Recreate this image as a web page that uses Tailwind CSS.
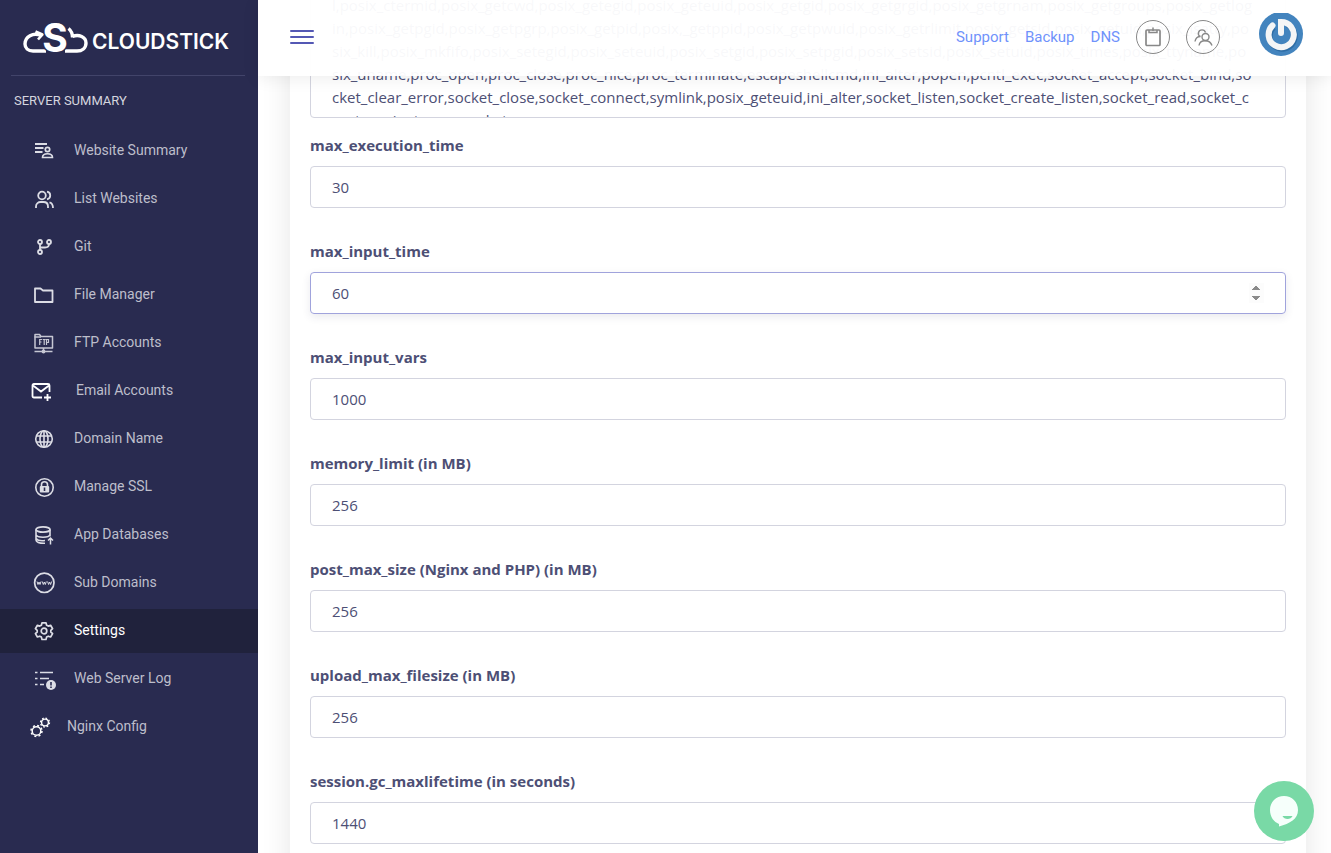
<!DOCTYPE html>
<html lang="en">
<head>
    <meta charset="UTF-8">
    <meta name="viewport" content="width=device-width, initial-scale=1.0">
    <title>CloudStick - Settings</title>
    <script src="https://cdn.jsdelivr.net/npm/@tailwindcss/browser@4"></script>
</head>
<body class="h-screen flex overflow-hidden bg-white font-['Open_Sans',sans-serif] text-[15px] text-[#4d4f75]">
    <!-- Sidebar -->
    <aside class="w-[258px] shrink-0 bg-[#292b50] font-[Roboto,sans-serif] text-[#bdbecb]">
        <a href="#" class="flex items-center h-[75px] pl-[22px] text-white" aria-label="CloudStick">
            <svg class="w-[68px] h-[60px]" viewBox="0 -12 68 60" fill="none" stroke="#fff" stroke-width="3.4">
                <path d="M19 15.500C11 12 3 17 3 24C3 28 6 31 11 31H24"/>
                <path d="M13.500 11.500L20.500 14.500L16 19.500" stroke-width="2.600"/>
                <path d="M43 31H55C60 31 64 28 64 23C64 17 57 14 50.500 16.500M46.500 8.500C49 10.500 50.500 13 50.500 17.500"/>
                <text x="33" y="32" font-family="Inter" font-size="39" font-weight="700" text-anchor="middle" fill="#fff" stroke="#292b50" stroke-width="3" paint-order="stroke">S</text>
            </svg>
            <span class="pt-[9px] pl-[2px] font-['Inter'] font-semibold text-[21px] leading-6">CLOUDSTICK</span>
        </a>
        <hr class="ml-[11px] mr-[13px] border-[#42446a]">
        <h2 class="px-[14px] pt-4 text-[13px] leading-[18px] text-[#d5d6df]">SERVER SUMMARY</h2>
        <nav class="mt-[19px] flex flex-col gap-1 text-[14px] leading-5 [&>a]:pb-[2px] [&_svg]:mt-[2px]">
            <a href="#" class="flex items-center h-[44px] pl-[33px]">
                <svg class="w-[22px] h-[22px] mr-[19px]" viewBox="0 0 22 22" fill="none" stroke="#dcdde5" stroke-width="2">
                    <path d="M2 4H14M2 8H10.500M2 12H9.500" stroke-width="1.800"/>
                    <circle cx="14.500" cy="9.500" r="2.200" stroke-width="1.700"/>
                    <path d="M9.500 17.500C9.500 12.500 19.500 12.500 19.500 17.500Z" stroke-width="1.600"/>
                </svg>
                Website Summary
            </a>
            <a href="#" class="flex items-center h-[44px] pl-[33px]">
                <svg class="w-[22px] h-[22px] mr-[19px]" viewBox="0 0 22 22" fill="none" stroke="#dcdde5" stroke-width="1.800">
                    <circle cx="9" cy="7.500" r="3.800"/>
                    <path d="M3 20V18.500C3 15.500 5.500 14 7.500 14H10.500C13 14 15 15.500 15 18.500V20M14 3.700C18.300 4.500 18.300 10.300 14 11.300M16.500 14.300C19 15 20 16.500 20 20"/>
                </svg>
                List Websites
            </a>
            <a href="#" class="flex items-center h-[44px] pl-[33px]">
                <svg class="w-[22px] h-[22px] mr-[19px]" viewBox="0 0 22 22" fill="none" stroke="#dcdde5" stroke-width="1.800">
                    <circle cx="7" cy="6" r="2"/>
                    <circle cx="16" cy="6" r="2"/>
                    <circle cx="7" cy="16" r="2"/>
                    <path d="M7 8V14M16 8C16 11 14.500 11.500 12 11.500H7"/>
                </svg>
                Git
            </a>
            <a href="#" class="flex items-center h-[44px] pl-[33px]">
                <svg class="w-[22px] h-[22px] mr-[19px]" viewBox="0 0 22 22" fill="none" stroke="#dcdde5" stroke-width="1.800" stroke-linejoin="round">
                    <path d="M2 4.500H7.500L10 6.500H19.500V18H2Z"/>
                </svg>
                File Manager
            </a>
            <a href="#" class="flex items-center h-[44px] pl-[33px]">
                <svg class="w-[22px] h-[22px] mr-[19px]" viewBox="0 0 22 22" fill="none" stroke="#c6c7d3" stroke-width="1.500">
                    <path d="M2 16V2.500H6.500L8 4.500H19.500V16Z" stroke-linejoin="round"/>
                    <path d="M1.500 5H8"/>
                    <path d="M10.500 16V19M1.500 19.500H19.500"/>
                    <circle cx="10.500" cy="19.500" r="1.200" fill="#c6c7d3"/>
                    <path d="M6.700 13V7.500H9M6.700 10H8.500M9.700 7.500H12.700M11.200 7.500V13M13.500 13V7.500H15.500V10.500H13.500" stroke-width="1.200"/>
                </svg>
                FTP Accounts
            </a>
            <a href="#" class="flex items-center h-[44px] pl-[31px]">
                <svg class="w-[22px] h-[22px] mr-[23px]" viewBox="0 0 22 22" fill="none" stroke="#fff" stroke-width="1.800">
                    <path d="M11 17.500H3C2 17.500 1.500 17 1.500 16V5.500C1.500 4.500 2 4 3 4H17C18 4 18.500 4.500 18.500 5.500V12M2 5.500L10 11.500L18 5.500"/>
                    <path d="M16.500 14V21M13 17.500H20"/>
                </svg>
                Email Accounts
            </a>
            <a href="#" class="flex items-center h-[44px] pl-[33px]">
                <svg class="w-[22px] h-[22px] mr-[19px]" viewBox="0 0 22 22" fill="none" stroke="#dcdde5" stroke-width="1.600">
                    <circle cx="11" cy="11" r="8.300"/>
                    <ellipse cx="11" cy="11" rx="4" ry="8.300"/>
                    <path d="M3.500 8H18.500M3.500 14H18.500M11 3V19"/>
                </svg>
                Domain Name
            </a>
            <a href="#" class="flex items-center h-[44px] pl-[33px]">
                <svg class="w-[22px] h-[22px] mr-[19px]" viewBox="0 0 22 22" fill="none" stroke="#dcdde5" stroke-width="1.600">
                    <circle cx="11.500" cy="11.500" r="8.700"/>
                    <rect x="6.800" y="10" width="9.400" height="6.500" rx="1" fill="#dcdde5" stroke="none"/>
                    <path d="M8.500 10V8.500C8.500 4.800 14.500 4.800 14.500 8.500V10"/>
                    <path d="M11.500 11.500V15" stroke="#292b50"/>
                </svg>
                Manage SSL
            </a>
            <a href="#" class="flex items-center h-[44px] pl-[33px]">
                <svg class="w-[22px] h-[22px] mr-[19px]" viewBox="0 0 22 22" fill="none" stroke="#dcdde5" stroke-width="1.700">
                    <ellipse cx="10" cy="5.500" rx="7" ry="2.700"/>
                    <path d="M3 5.500V16C3 18 6 19.500 12 19.300M17 5.500V12.500M3 10.700C4 14 16 14 17 10.700M3 14.500C4.500 16.500 8 17 12 16.500" stroke-width="1.600"/>
                    <path d="M17.500 20.500V14.500M15 16.500L17.500 14L20 16.500" stroke-width="1.500"/>
                </svg>
                App Databases
            </a>
            <a href="#" class="flex items-center h-[44px] pl-[33px]">
                <svg class="w-[22px] h-[22px] mr-[19px]" viewBox="0 0 22 22" fill="none" stroke="#dcdde5" stroke-width="1.700">
                    <circle cx="11.300" cy="10.800" r="9.700"/>
                    <path d="M4 9.500L5 12.500L6 10L7 12.500L8 9.500M9.300 9.500L10.300 12.500L11.300 10L12.300 12.500L13.300 9.500M14.600 9.500L15.600 12.500L16.600 10L17.600 12.500L18.600 9.500" stroke-width="1"/>
                </svg>
                Sub Domains
            </a>
            <a href="#" class="flex items-center h-[44px] pl-[33px] bg-[#20223c] text-white" aria-current="page">
                <svg class="w-[22px] h-[22px] mr-[19px]" viewBox="0 0 22 22" fill="none" stroke="#dcdde5" stroke-width="1.700" stroke-linejoin="round">
                    <circle cx="11" cy="11" r="2.800"/>
                    <path d="M9 2.800H13L13.600 5.200L15.300 6.100L17.600 5.300L19.600 8.700L17.800 10.400V12L19.600 13.600L17.600 17L15.300 16.200L13.600 17.100L13 19.500H9L8.400 17.100L6.700 16.200L4.400 17L2.400 13.600L4.200 12V10.400L2.400 8.700L4.400 5.300L6.700 6.100L8.400 5.200Z"/>
                </svg>
                Settings
            </a>
            <a href="#" class="flex items-center h-[44px] pl-[33px]">
                <svg class="w-[24px] h-[24px] mr-[17px]" viewBox="0 0 24 24" fill="none" stroke="#dcdde5" stroke-width="1.600">
                    <path d="M2 5.500H4.500M7 5.500H20M2 11.500H4.500M7 11.500H16M2 17.500H4.500M7 17.500H11"/>
                    <circle cx="18" cy="18" r="5" fill="#dcdde5" stroke="none"/>
                    <path d="M18 15V18.500M18 19.500V21" stroke="#292b50"/>
                </svg>
                Web Server Log
            </a>
            <a href="#" class="flex items-center h-[44px] pl-[29px]">
                <svg class="w-[22px] h-[22px] mr-[16px]" viewBox="0 0 22 22" fill="none" stroke="#fff">
                    <circle cx="7.500" cy="15" r="4.300" stroke-width="1.500"/>
                    <circle cx="7.500" cy="15" r="5.500" stroke-width="1.500" stroke-dasharray="2 2.320"/>
                    <circle cx="16" cy="6.500" r="3.400" stroke-width="1.400"/>
                    <circle cx="16" cy="6.500" r="4.500" stroke-width="1.300" stroke-dasharray="1.700 1.830"/>
                </svg>
                Nginx Config
            </a>
        </nav>
    </aside>

    <div class="relative flex-1 min-w-0">
        <!-- Top bar, the form scrolls under it -->
        <header class="absolute inset-x-0 top-0 z-10 h-[76px] flex items-center pl-8 pr-7 pb-[2px] bg-white/96 shadow-[0_2px_16px_rgba(0,0,0,0.08)] font-[Roboto,sans-serif]">
            <button type="button" aria-label="Toggle menu" class="flex flex-col gap-1">
                <span class="w-6 h-[2px] rounded-full bg-[#5458b4]"></span>
                <span class="w-6 h-[2px] rounded-full bg-[#5458b4]"></span>
                <span class="w-6 h-[2px] rounded-full bg-[#5458b4]"></span>
            </button>
            <nav class="ml-auto flex items-center gap-4 text-[15px] text-[#6f92fb]">
                <a href="#">Support</a>
                <a href="#">Backup</a>
                <a href="#">DNS</a>
                <button type="button" aria-label="Clipboard" class="size-[34px] rounded-full border border-[#888] flex items-center justify-center">
                    <svg class="w-[18px] h-[20px]" viewBox="0 0 18 20" fill="none" stroke="#888" stroke-width="1.700">
                        <rect x="2" y="3" width="14" height="15.500" rx="1"/>
                        <path d="M5 3V5.500H13V3M9 0.500V4" stroke-width="1.500"/>
                    </svg>
                </button>
                <button type="button" aria-label="Users" class="size-[34px] rounded-full border border-[#888] flex items-center justify-center">
                    <svg class="w-[20px] h-[20px]" viewBox="0 0 20 20" fill="none" stroke="#888" stroke-width="1.400">
                        <path d="M6 18.500C6.500 15.500 8.500 13.700 12 13.700S18 15.500 19 18.500"/>
                        <circle cx="12.500" cy="10" r="3.500"/>
                        <path d="M12.500 5.500C11.500 2 6.500 2 5.500 5.500C5 7.500 6 9 7.500 9.500C4.500 9.500 2.500 11.500 2 14.500"/>
                    </svg>
                </button>
            </nav>
            <a href="#" aria-label="Profile" class="ml-[39px] mb-1">
                <svg class="size-[44px]" viewBox="0 0 44 44" fill="none">
                    <circle cx="22" cy="21" r="22" fill="#4384be"/>
                    <path d="M13.500 13A12.600 12.600 0 1 0 27 10.500" stroke="#2e6da6" stroke-width="6" transform="translate(1 1)"/>
                    <path d="M13.500 12.500A12.600 12.600 0 1 0 22 9V20" stroke="#f4f5f6" stroke-width="6" stroke-linecap="round"/>
                </svg>
            </a>
        </header>

        <!-- PHP settings form -->
        <main class="h-full overflow-hidden pl-8 pr-[25px]">
            <form class="-mt-2 px-5 pb-5 bg-white shadow-[0_0_28px_rgba(0,0,0,0.1)]">
                <textarea aria-label="disable_functions" spellcheck="false" wrap="off" class="block w-full h-[126px] mb-4 px-[21px] pt-px resize-none overflow-hidden rounded border border-[#d3d4df] leading-[23px]">l,posix_ctermid,posix_getcwd,posix_getegid,posix_geteuid,posix_getgid,posix_getgrgid,posix_getgrnam,posix_getgroups,posix_getlog
in,posix_getpgid,posix_getpgrp,posix_getpid,posix,_getppid,posix_getpwuid,posix_getrlimit,posix_getsid,posix_getuid,posix_isatty,po
six_kill,posix_mkfifo,posix_setegid,posix_seteuid,posix_setgid,posix_setpgid,posix_setsid,posix_setuid,posix_times,posix_ttyname,po
six_uname,proc_open,proc_close,proc_nice,proc_terminate,escapeshellcmd,ini_alter,popen,pcntl_exec,socket_accept,socket_bind,so
cket_clear_error,socket_close,socket_connect,symlink,posix_geteuid,ini_alter,socket_listen,socket_create_listen,socket_read,socket_c
reate_pair,stream_socket_server</textarea>
                <div class="mb-8">
                    <label for="max_execution_time" class="block mb-[10px] font-bold leading-[22px]">max_execution_time</label>
                    <input type="number" id="max_execution_time" value="30" class="block w-full h-[42px] px-[21px] rounded border border-[#d3d4df]">
                </div>
                <div class="mb-8">
                    <label for="max_input_time" class="block mb-[10px] font-bold leading-[22px]">max_input_time</label>
                    <input type="number" id="max_input_time" value="60" class="block w-full h-[42px] px-[21px] rounded border border-[#a0a3dc] shadow-[0_3px_9px_rgba(50,50,90,0.1)] [&::-webkit-inner-spin-button]:opacity-100 [&::-webkit-inner-spin-button]:bg-[#f1f1f1]">
                </div>
                <div class="mb-8">
                    <label for="max_input_vars" class="block mb-[10px] font-bold leading-[22px]">max_input_vars</label>
                    <input type="number" id="max_input_vars" value="1000" class="block w-full h-[42px] px-[21px] rounded border border-[#d3d4df]">
                </div>
                <div class="mb-8">
                    <label for="memory_limit" class="block mb-[10px] font-bold leading-[22px]">memory_limit (in MB)</label>
                    <input type="number" id="memory_limit" value="256" class="block w-full h-[42px] px-[21px] rounded border border-[#d3d4df]">
                </div>
                <div class="mb-8">
                    <label for="post_max_size" class="block mb-[10px] font-bold leading-[22px]">post_max_size (Nginx and PHP) (in MB)</label>
                    <input type="number" id="post_max_size" value="256" class="block w-full h-[42px] px-[21px] rounded border border-[#d3d4df]">
                </div>
                <div class="mb-8">
                    <label for="upload_max_filesize" class="block mb-[10px] font-bold leading-[22px]">upload_max_filesize (in MB)</label>
                    <input type="number" id="upload_max_filesize" value="256" class="block w-full h-[42px] px-[21px] rounded border border-[#d3d4df]">
                </div>
                <div class="mb-8">
                    <label for="gc_maxlifetime" class="block mb-[10px] font-bold leading-[22px]">session.gc_maxlifetime (in seconds)</label>
                    <input type="number" id="gc_maxlifetime" value="1440" class="block w-full h-[42px] px-[21px] rounded border border-[#d3d4df]">
                </div>
            </form>
        </main>
    </div>

    <!-- Chat bubble -->
    <button type="button" aria-label="Open chat" class="fixed right-[17px] bottom-[12px] z-20 size-[60px] rounded-full bg-[#79d9a6]">
        <svg class="size-[60px]" viewBox="0 0 60 60">
            <path d="M30 15C22 15 16 21 16 29C16 36 20 41 25 43V45.500C36 42.500 44 38 44 29C44 21 38 15 30 15Z" fill="#f6fffb"/>
            <path d="M28.500 35H38.500C37 39 30 39 28.500 35Z" fill="#79d9a6"/>
        </svg>
    </button>
</body>
</html>
